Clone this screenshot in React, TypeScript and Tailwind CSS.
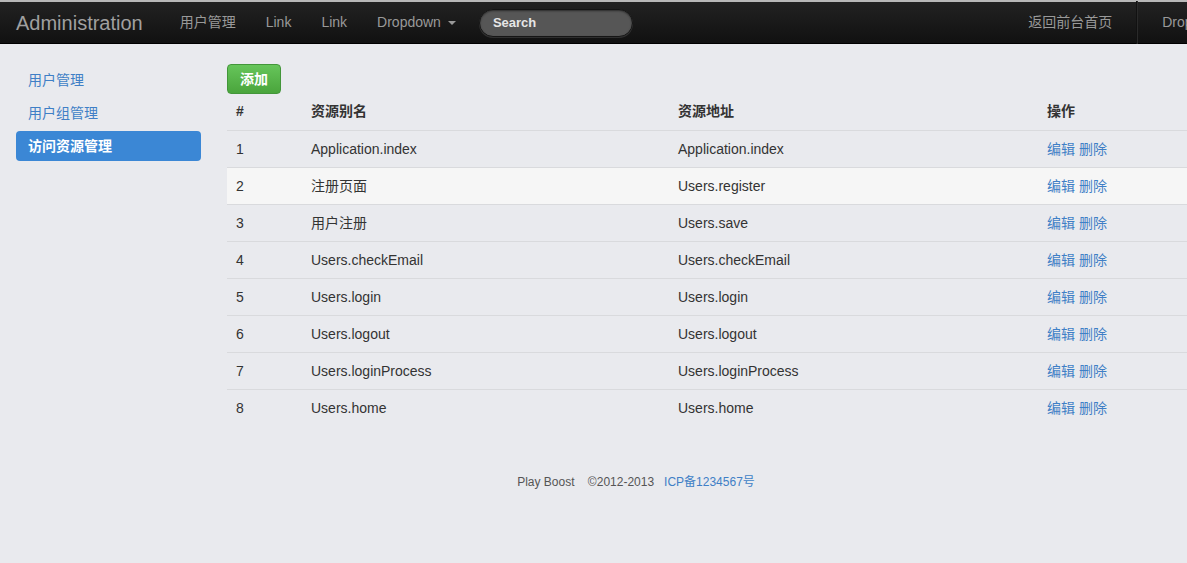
import React from "react";

const rows = [
  ["1", "Application.index", "Application.index"],
  ["2", "注册页面", "Users.register"],
  ["3", "用户注册", "Users.save"],
  ["4", "Users.checkEmail", "Users.checkEmail"],
  ["5", "Users.login", "Users.login"],
  ["6", "Users.logout", "Users.logout"],
  ["7", "Users.loginProcess", "Users.loginProcess"],
  ["8", "Users.home", "Users.home"],
];

const font = {
  fontFamily:
    '"Helvetica Neue", Helvetica, "Liberation Sans", Arial, "Noto Sans CJK SC", sans-serif',
};

export default function App() {
  return (
    <div className="w-[1187px] h-[563px] overflow-hidden bg-[#e9eaee]" style={font}>
      <div className="w-[1272px]">
        {/* navbar */}
        <div className="h-[44px] border-t-2 border-[#b8b8b8] border-b border-b-[#000] bg-gradient-to-b from-[#222222] to-[#111111] flex items-center px-4 text-[14px] text-[#999999]">
          <div className="text-[20px] text-[#a0a0a0] mr-[22px] leading-none">Administration</div>
          <div className="px-[15px]">用户管理</div>
          <div className="px-[15px]">Link</div>
          <div className="px-[15px]">Link</div>
          <div className="px-[15px] flex items-center">
            Dropdown
            <span className="ml-[7px] mt-[1px] w-0 h-0 border-l-[4px] border-r-[4px] border-t-[4px] border-l-transparent border-r-transparent border-t-[#999999]" />
          </div>
          <div className="ml-[8px] w-[154px] h-[28px] rounded-full bg-[#565656] border border-[#151515] shadow-[inset_0_1px_2px_rgba(0,0,0,0.5),0_1px_0_rgba(255,255,255,0.12)] flex items-center pl-[13px] text-[13px] font-bold text-[#e6e6e6]">
            Search
          </div>
          <div className="flex-1" />
          <div className="px-[15px]">返回前台首页</div>
          <div className="mx-[9px] w-[2px] h-[43px] border-l border-l-[#111111] border-r border-r-[#2a2a2a]" />
          <div className="px-[15px] flex items-center">
            Dropdown
            <span className="ml-[7px] mt-[1px] w-0 h-0 border-l-[4px] border-r-[4px] border-t-[4px] border-l-transparent border-r-transparent border-t-[#999999]" />
          </div>
        </div>

        <div className="flex px-4 pt-[20px]">
          {/* sidebar */}
          <div className="w-[185px] flex flex-col gap-[3px] text-[14px] pt-[1px]">
            <div className="h-[30px] flex items-center px-3 text-[#3f7fc6]">用户管理</div>
            <div className="h-[30px] flex items-center px-3 text-[#3f7fc6]">用户组管理</div>
            <div className="h-[30px] flex items-center px-3 rounded-[4px] bg-[#3b87d5] text-white font-bold">
              访问资源管理
            </div>
          </div>

          {/* main */}
          <div className="ml-[26px] flex-1">
            <button className="w-[54px] h-[30px] rounded-[4px] bg-gradient-to-b from-[#66c55a] to-[#4aa53c] border border-[#43963a] text-white text-[14px] font-bold">
              添加
            </button>
            <table className="w-full text-[14px] text-[#333333] border-collapse">
              <thead>
                <tr className="h-[36px] text-left">
                  <th className="w-[76px] pl-[9px] font-bold">#</th>
                  <th className="w-[367px] pl-[8px] font-bold">资源别名</th>
                  <th className="w-[369px] pl-[8px] font-bold">资源地址</th>
                  <th className="pl-[8px] font-bold">操作</th>
                </tr>
              </thead>
              <tbody>
                {rows.map((r, i) => (
                  <tr
                    key={r[0]}
                    className={`h-[37px] border-t border-[#d9dadd] ${i === 1 ? "bg-[#f6f6f6]" : ""}`}
                  >
                    <td className="pl-[9px] pt-[2px]">{r[0]}</td>
                    <td className="pl-[8px] pt-[2px]">{r[1]}</td>
                    <td className="pl-[8px] pt-[2px]">{r[2]}</td>
                    <td className="pl-[8px] pt-[2px] text-[#3f7fc6]">
                      编辑 删除
                    </td>
                  </tr>
                ))}
              </tbody>
            </table>
          </div>
        </div>

        {/* footer */}
        <div className="mt-[47px] px-4 text-center text-[12px] text-[#555555]">
          Play Boost <span className="ml-[10px]">©2012-2013</span>
          <span className="ml-[10px] text-[#3f7fc6]">ICP备1234567号</span>
        </div>
      </div>
    </div>
  );
}
